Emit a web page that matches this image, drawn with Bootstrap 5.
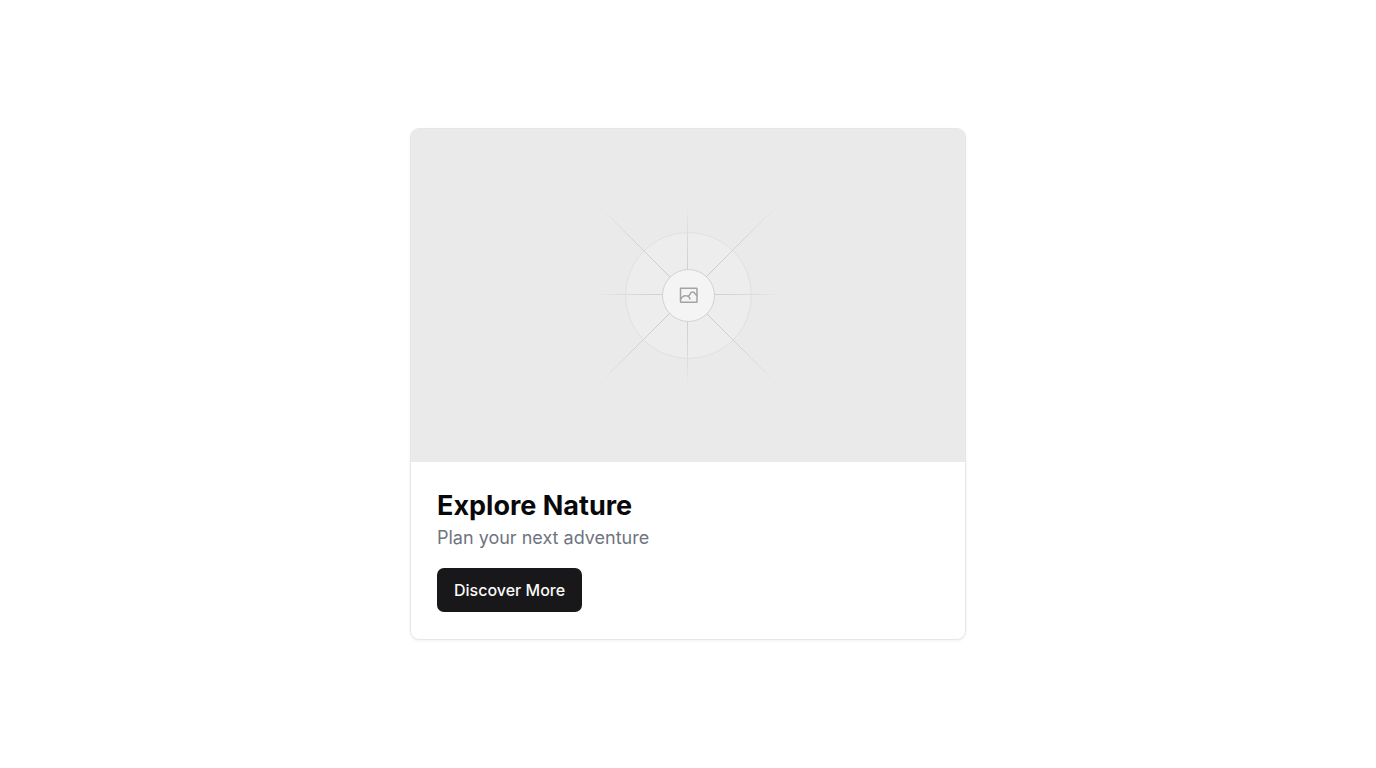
<!DOCTYPE html>
<html lang="en">
<head>
<meta charset="utf-8">
<meta name="viewport" content="width=device-width, initial-scale=1">
<title>Explore Nature</title>
<link href="https://cdn.jsdelivr.net/npm/bootstrap@5.3.0/dist/css/bootstrap.min.css" rel="stylesheet">
<style>
  body { font-family: Inter, "Liberation Sans", sans-serif; background: #fff; color: #09090b; }
  .promo { max-width: 556px; border: 1px solid #e6e6e8; border-radius: 9px; box-shadow: 0 1px 3px rgba(0,0,0,.06); }
  .promo-art { background: #eaeaea; aspect-ratio: 554 / 333; }
  .promo-art svg { width: 100%; height: 100%; }
  .promo-body { padding: 27px 26px; }
  .promo-title { font-size: 27px; line-height: 34px; font-weight: 700; margin-bottom: 1px; }
  .promo-text { font-size: 18px; line-height: 28px; color: #6f747f; }
  .btn-promo { --bs-btn-color: #fafafa; --bs-btn-bg: #18181b; --bs-btn-hover-color: #fafafa; --bs-btn-hover-bg: #2f2f31;
    --bs-btn-font-weight: 500; --bs-btn-border-radius: 7px; border: 0; padding: 10px 17px; line-height: 24px; }
</style>
</head>
<body>
<main class="min-vh-100 d-flex align-items-center justify-content-center">
  <article class="card promo w-100 overflow-hidden">
    <div class="promo-art">
      <svg class="d-block" viewBox="0 0 554 333" role="img" aria-label="Image placeholder">
        <defs>
          <radialGradient id="ray" gradientUnits="userSpaceOnUse" cx="277" cy="166" r="92">
            <stop offset=".3" stop-color="#d0d0d0"/>
            <stop offset=".65" stop-color="#dadada"/>
            <stop offset="1" stop-color="#eaeaea"/>
          </radialGradient>
          <radialGradient id="diagonal" gradientUnits="userSpaceOnUse" cx="277" cy="166" r="132">
            <stop offset=".25" stop-color="#cbcbcb"/>
            <stop offset=".6" stop-color="#d5d5d5"/>
            <stop offset="1" stop-color="#eaeaea"/>
          </radialGradient>
        </defs>
        <circle cx="277.500" cy="166.500" r="63" fill="#ededed" stroke="#e0e0e0"/>
        <path d="M185 165.500H369M276.500 74V258" stroke="url(#ray)"/>
        <path d="M187 76L367 256M367 76L187 256" stroke="url(#diagonal)"/>
        <circle cx="277.500" cy="166.500" r="26" fill="#f4f4f4" stroke="#d2d2d2"/>
        <g fill="none" stroke="#a3a3a3" stroke-width="1.500" stroke-linejoin="round">
          <rect x="269.500" y="159.300" width="16.500" height="14" rx=".5"/>
          <path d="M269.500 170.500C271 167.500 273 166.500 275 166.700C277 166.700 278.500 168 279.200 170.500M276.500 167.200C278.200 167.300 278.700 166.300 279 165.300C279.800 162.500 283.200 162.200 284.300 165.200C285 165.400 285.600 166 286 166.800"/>
        </g>
      </svg>
    </div>
    <div class="promo-body">
      <h1 class="promo-title">Explore Nature</h1>
      <p class="promo-text mb-3">Plan your next adventure</p>
      <button type="button" class="btn btn-promo">Discover More</button>
    </div>
  </article>
</main>
<script src="https://cdn.jsdelivr.net/npm/bootstrap@5.3.0/dist/js/bootstrap.bundle.min.js"></script>
</body>
</html>
